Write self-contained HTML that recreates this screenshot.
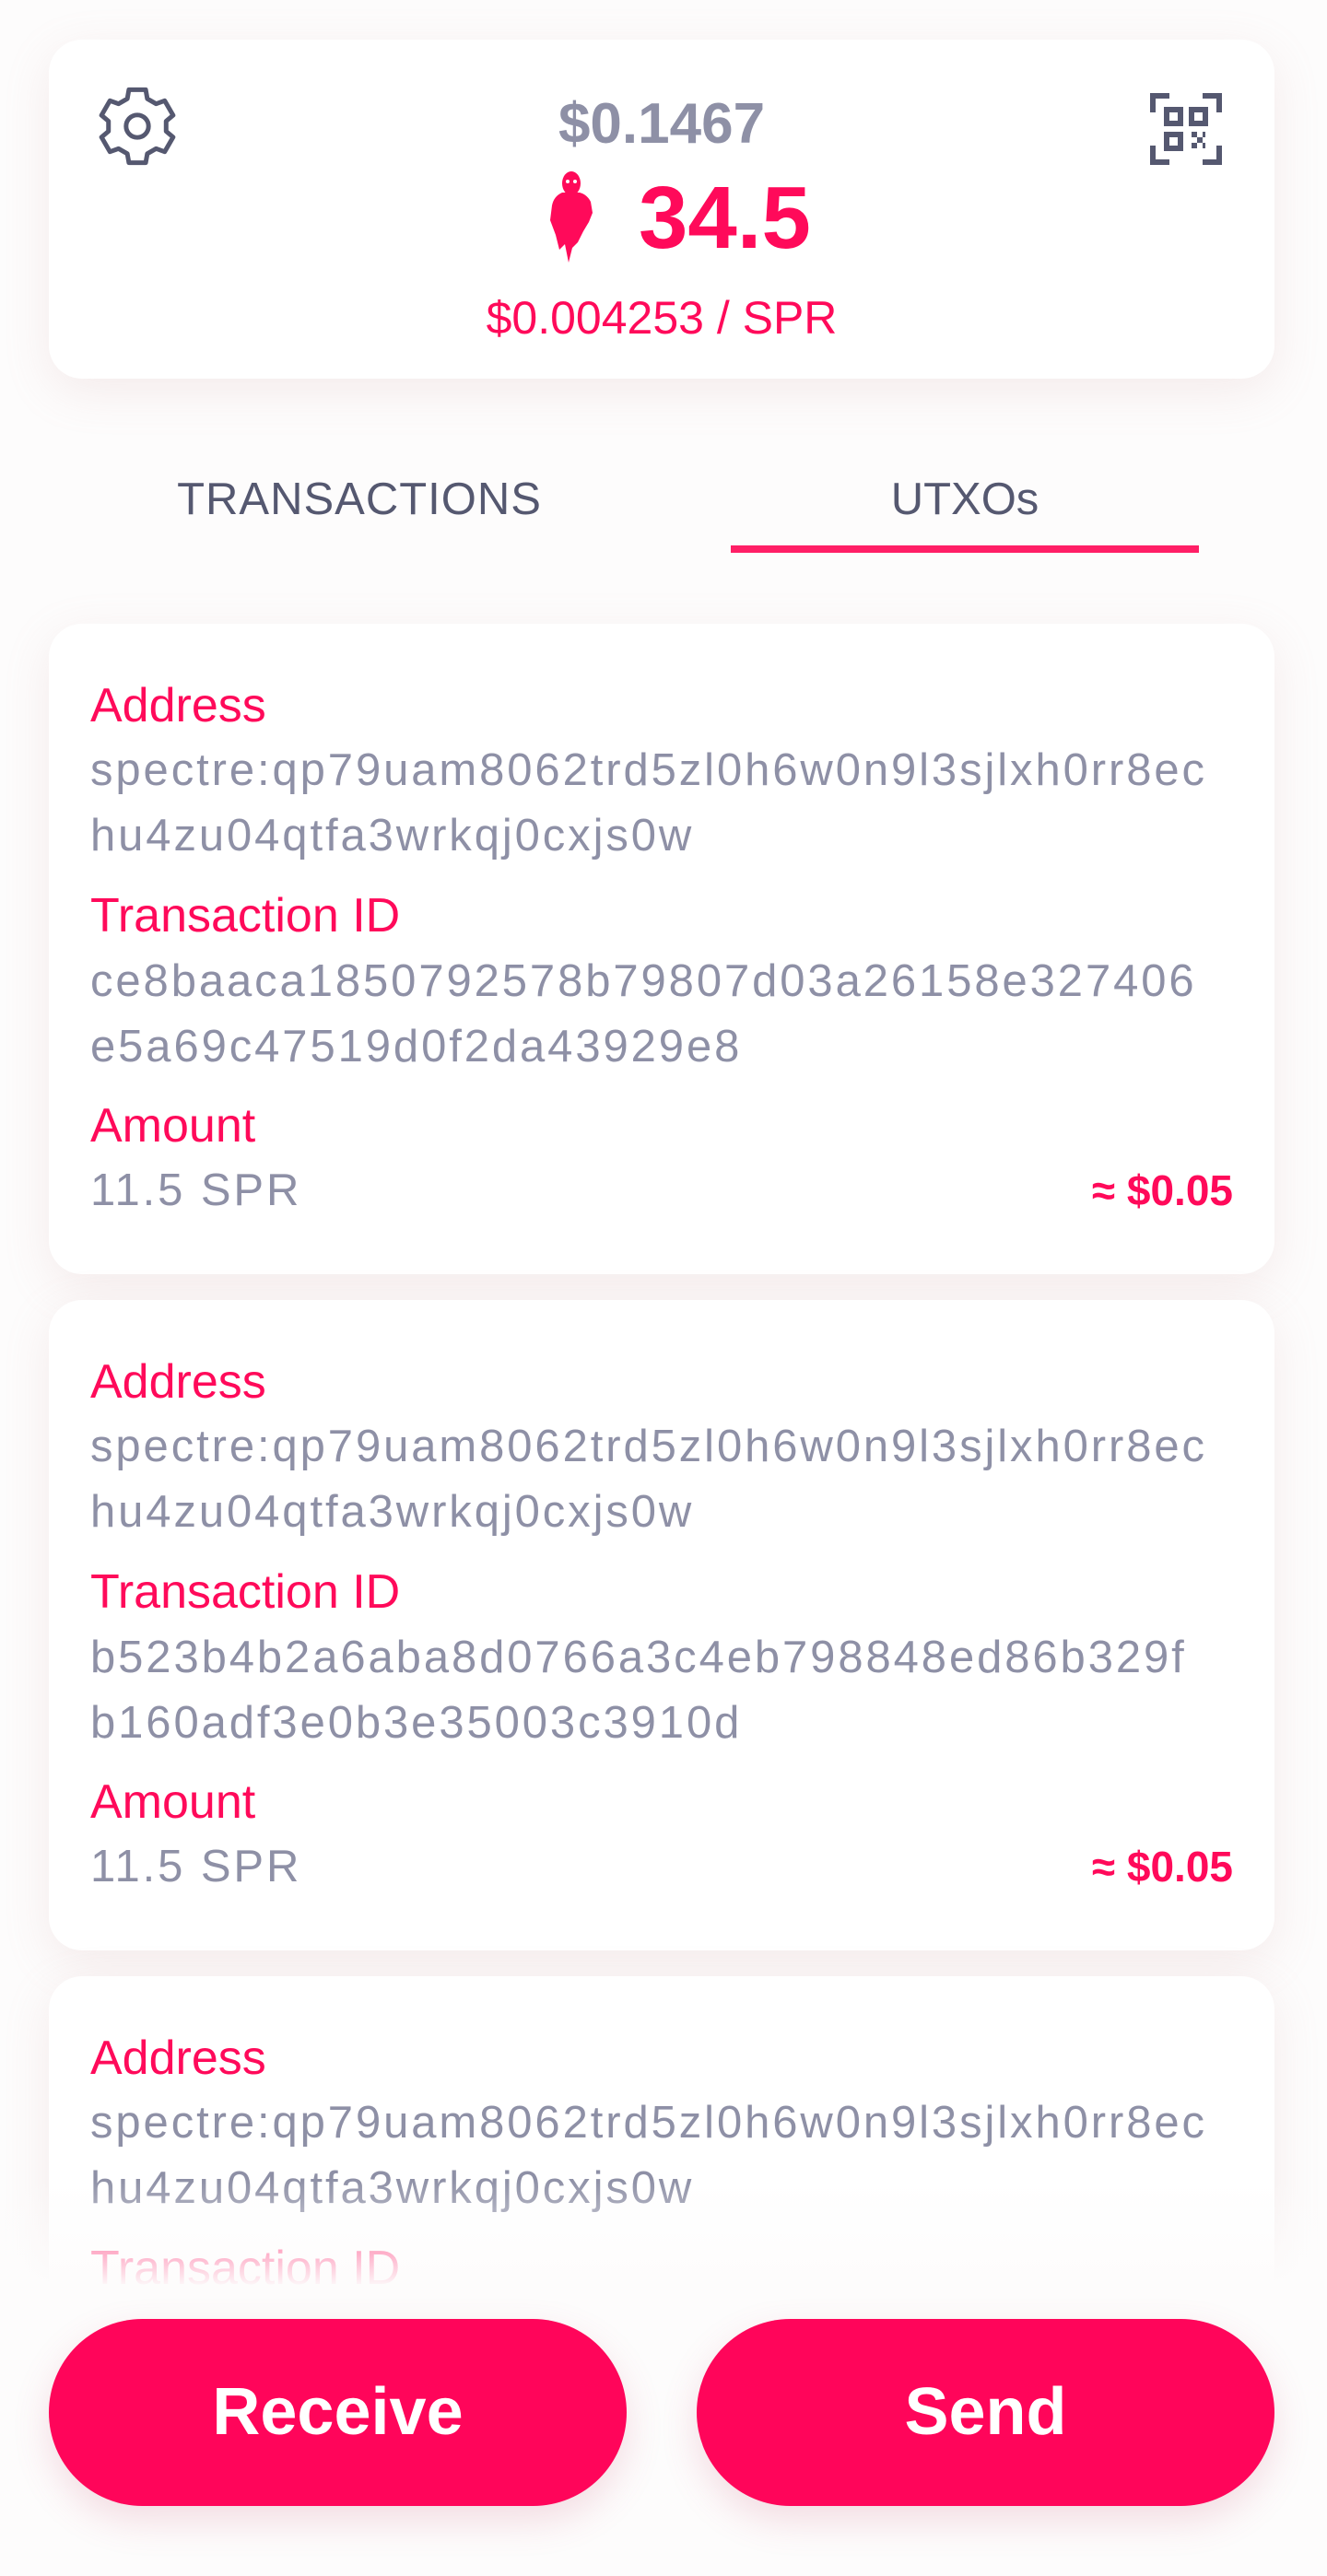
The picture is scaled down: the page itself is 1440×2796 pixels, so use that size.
<!DOCTYPE html>
<html><head><meta charset="utf-8">
<style>
*{margin:0;padding:0;box-sizing:border-box}
html,body{width:1440px;height:2796px;background:#fdfcfc;overflow:hidden;font-family:"Liberation Sans",sans-serif}
.abs{position:absolute}
.card{position:absolute;left:53px;width:1330px;background:#fff;border-radius:36px;box-shadow:0 14px 50px rgba(200,150,150,0.16)}
.lab{position:absolute;left:45px;color:#ff0a5a;font-size:52px;line-height:60px}
.val{position:absolute;left:45px;color:#8e90a6;font-size:49px;line-height:60px;white-space:nowrap;letter-spacing:2.9px}
.usd{position:absolute;right:45px;color:#ff0a5a;font-size:46px;font-weight:bold;line-height:60px}
.btn{position:absolute;top:2517px;height:203px;width:627px;border-radius:102px;background:#ff055a;color:#fff;font-weight:bold;font-size:72px;text-align:center;line-height:203px;box-shadow:0 16px 40px rgba(200,80,110,0.18)}
</style></head><body>

<div class="card" style="top:43px;height:368px">
  <svg class="abs" style="left:48px;top:46px" width="96" height="96" viewBox="-1 -1 26 26" fill="none" stroke="#555870" stroke-width="1.35" stroke-linejoin="round">
    <polygon points="9.06,3.92 9.53,1.28 14.47,1.28 14.94,3.92 17.53,5.41 20.04,4.50 22.52,8.78 20.47,10.51 20.47,13.49 22.52,15.22 20.04,19.50 17.53,18.59 14.94,20.08 14.47,22.72 9.53,22.72 9.06,20.08 6.47,18.59 3.96,19.50 1.48,15.22 3.53,13.49 3.53,10.51 1.48,8.78 3.96,4.50 6.47,5.41"/>
    <circle cx="12" cy="12" r="3.3"/>
  </svg>
  <div class="abs" style="left:0;width:1330px;top:60px;text-align:center;color:#8e90a6;font-size:62px;font-weight:bold;line-height:64px">$0.1467</div>
  <svg class="abs" style="left:544px;top:142px" width="48" height="102" viewBox="0 0 48 102" fill="#ff0a5a">
    <ellipse cx="23" cy="14" rx="10" ry="13"/>
    <path d="M13 24 Q4 28 2 38 L0 54 L6 70 L10 86 L16 80 L20 100 L24 84 L30 78 L36 66 L42 56 L46 46 L44 34 Q40 26 32 24 Z"/>
    <circle cx="19" cy="12" r="2" fill="#fff"/><circle cx="27" cy="12" r="2" fill="#fff"/>
  </svg>
  <div class="abs" style="left:640px;top:142px;color:#ff0a5a;font-size:96px;font-weight:bold;line-height:104px">34.5</div>
  <div class="abs" style="left:0;width:1330px;top:274px;text-align:center;color:#ff0a5a;font-size:50px;line-height:56px">$0.004253 / SPR</div>
  <svg class="abs" style="left:1195px;top:58px" width="78" height="78" viewBox="0 0 26 26" fill="none" stroke="#555870" stroke-width="2">
    <path d="M1 7V1h6M19 1h6v6M25 19v6h-6M7 25H1v-6"/>
    <rect x="6" y="6" width="5" height="5"/><rect x="15" y="6" width="5" height="5"/><rect x="6" y="15" width="5" height="5"/>
    <path d="M15 15h2M19 15h1M17 17h2M15 19h2M19 19h1" />
  </svg>
</div>

<div class="abs" style="left:140px;top:512px;width:500px;text-align:center;color:#555870;font-size:49px;letter-spacing:1px;line-height:60px">TRANSACTIONS</div>
<div class="abs" style="left:847px;top:512px;width:400px;text-align:center;color:#555870;font-size:49px;line-height:60px">UTXOs</div>
<div class="abs" style="left:793px;top:592px;width:508px;height:8px;background:#ff1f66"></div>

<div class="card" style="top:677px;height:706px">
  <div class="lab" style="top:59px">Address</div>
  <div class="val" style="top:129px">spectre:qp79uam8062trd5zl0h6w0n9l3sjlxh0rr8ec</div>
  <div class="val" style="top:200px">hu4zu04qtfa3wrkqj0cxjs0w</div>
  <div class="lab" style="top:287px">Transaction ID</div>
  <div class="val" style="top:358px">ce8baaca1850792578b79807d03a26158e327406</div>
  <div class="val" style="top:429px">e5a69c47519d0f2da43929e8</div>
  <div class="lab" style="top:515px">Amount</div>
  <div class="val" style="top:585px">11.5 SPR</div>
  <div class="usd" style="top:585px">≈ $0.05</div>
</div>

<div class="card" style="top:1411px;height:706px">
  <div class="lab" style="top:59px">Address</div>
  <div class="val" style="top:129px">spectre:qp79uam8062trd5zl0h6w0n9l3sjlxh0rr8ec</div>
  <div class="val" style="top:200px">hu4zu04qtfa3wrkqj0cxjs0w</div>
  <div class="lab" style="top:287px">Transaction ID</div>
  <div class="val" style="top:358px">b523b4b2a6aba8d0766a3c4eb798848ed86b329f</div>
  <div class="val" style="top:429px">b160adf3e0b3e35003c3910d</div>
  <div class="lab" style="top:515px">Amount</div>
  <div class="val" style="top:585px">11.5 SPR</div>
  <div class="usd" style="top:585px">≈ $0.05</div>
</div>

<div class="card" style="top:2145px;height:600px">
  <div class="lab" style="top:59px">Address</div>
  <div class="val" style="top:129px">spectre:qp79uam8062trd5zl0h6w0n9l3sjlxh0rr8ec</div>
  <div class="val" style="top:200px">hu4zu04qtfa3wrkqj0cxjs0w</div>
  <div class="lab" style="top:287px">Transaction ID</div>
</div>

<div class="abs" style="left:0;top:2365px;width:1440px;height:431px;background:linear-gradient(to bottom,rgba(253,252,252,0) 0px,rgba(253,252,252,0.6) 70px,#fdfcfc 118px,#fdfcfc 100%)"></div>

<div class="btn" style="left:53px">Receive</div>
<div class="btn" style="left:756px">Send</div>
</body></html>
